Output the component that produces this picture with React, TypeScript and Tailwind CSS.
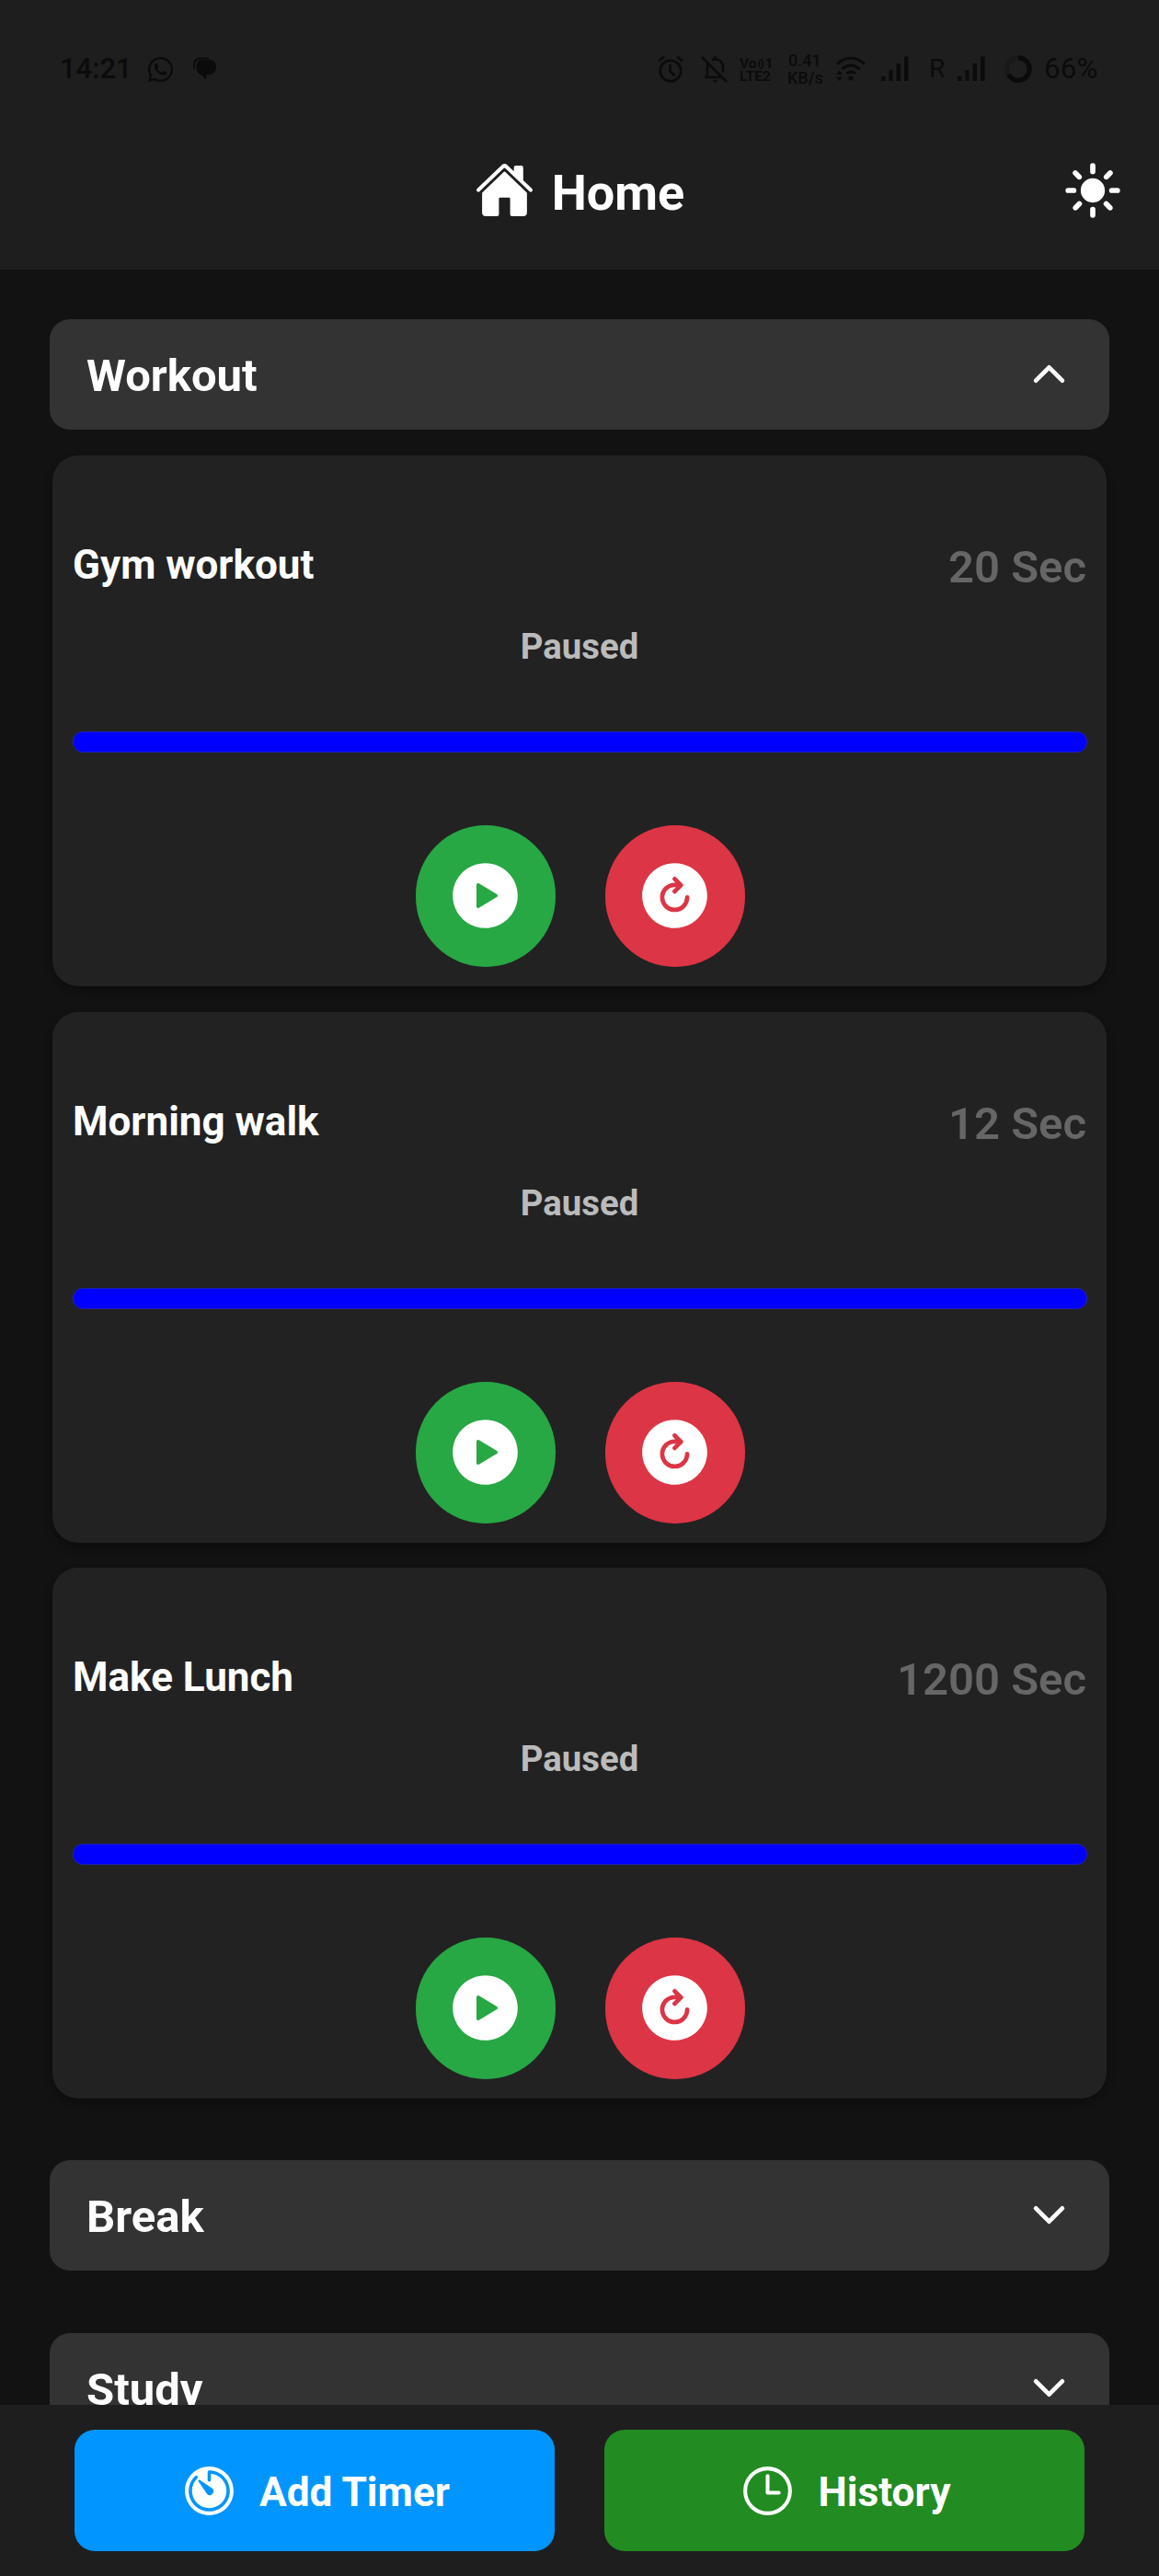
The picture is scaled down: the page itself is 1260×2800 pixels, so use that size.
import React from "react";
import {
  IoChevronDown,
  IoChevronUp,
  IoHome,
  IoPlayCircle,
  IoRefreshCircle,
  IoSunny,
  IoTimeOutline,
  IoTimer,
} from "react-icons/io5";
import { FaWhatsapp } from "react-icons/fa";

function Signal() {
  return (
    <svg width="30" height="28" viewBox="0 0 30 28" fill="currentColor">
      <path d="M0 22h4.500v5H0zM8.500 15h4v12h-4zM16.500 8h4.500v19h-4.500zM25 .5h4.500V27H25z" />
    </svg>
  );
}

function StatusBar() {
  return (
    <div className="flex h-[150px] items-start pt-[54px] pl-[65px] text-[#0b0b0b]">
      <div className="flex h-[42px] items-center">
        <span className="w-[94px] text-[31px] font-medium">14:21</span>
        <FaWhatsapp className="mr-[20px] size-[31px]" />
        <svg width="26" height="26" viewBox="0 0 26 26" fill="currentColor">
          <path d="M9 3H18c4 0 7 3 7 7.500S22 19 18 19h-3l-1.500 5.500L8.500 19C5 18.500 3.500 15 3.500 11S5 3 9 3z" />
          <path d="M1.500 13C0 7 2 1.500 8 1.500h9" fill="none" stroke="currentColor" strokeWidth="2" />
        </svg>
      </div>
      <div className="ml-[479px] flex h-[42px] items-center">
        <svg className="mr-[19px]" width="28" height="30" viewBox="0 0 28 30" fill="none" stroke="currentColor" strokeWidth="2.600">
          <circle cx="14" cy="17" r="11.300" />
          <path d="M1 6.500l6-5M27 6.500l-6-5M13.500 10v7.500l5 4.500" />
        </svg>
        <svg className="mr-[12px]" width="30" height="30" viewBox="0 0 30 30" fill="none" stroke="currentColor" strokeWidth="2.600">
          <path d="M1 2l27 27M4 24h19M7 24V13c0-2 .5-3.500 1.500-5M12 5.500c6-3 12 1 12 8v5" />
          <path d="M12.500 27h6l-3 3zM13 3.500L15.500 0 18 3.500z" fill="currentColor" stroke="none" />
        </svg>
        <div className="mt-[2px] w-[52px] text-[15.500px] leading-[14px] font-bold">
          <div className="flex items-center">
            Vo
            <svg className="mx-[1px]" width="7" height="13" viewBox="0 0 7 13" fill="none" stroke="currentColor" strokeWidth="1.700">
              <path d="M0 3q3 3.500 0 7M3 1q5 5.500 0 11" />
            </svg>
            1
          </div>
          <div>LTE2</div>
        </div>
        <div className="w-[52px] text-[18px] leading-[19px] font-medium">
          <div className="pl-[1px]">0.41</div>
          <div>KB/s</div>
        </div>
        <svg className="mr-[16px]" width="34" height="28" viewBox="0 0 34 28" fill="none" stroke="currentColor" strokeWidth="3">
          <path d="M2 8.500q15-13 30 0M7.500 14q9.500-8 19 0M12.500 19q5-4 9.500 0" />
          <circle cx="17" cy="24" r="2.600" fill="currentColor" stroke="none" />
          <path d="M1 20l3.500-4.500L8 20zM1 22.500L4.500 27 8 22.500z" fill="currentColor" stroke="none" />
        </svg>
        <Signal />
        <span className="w-[53px] pl-[22px] text-[28px]">R</span>
        <Signal />
        <svg className="mr-[13px] ml-[21px]" width="30" height="30" viewBox="0 0 30 30" fill="none" strokeWidth="5">
          <circle cx="15" cy="15" r="12.300" stroke="#191919" />
          <path d="M15 2.700A12.300 12.300 0 1 1 4.300 21.100" stroke="currentColor" />
        </svg>
        <span className="text-[31.500px]">66%</span>
      </div>
    </div>
  );
}

function Section({ title, open = false }: { title: string; open?: boolean }) {
  return (
    <div className="flex h-[120px] shrink-0 items-center justify-between rounded-[22px] bg-[#333333] pr-[40px] pl-[40px]">
      <span className="pt-[4px] text-[49px] leading-[60px] font-bold">{title}</span>
      {open ? <IoChevronUp className="-mt-px size-[51px]" /> : <IoChevronDown className="-mt-px size-[51px]" />}
    </div>
  );
}

function TimerCard({ name, time }: { name: string; time: string }) {
  return (
    <div className="mx-[3px] flex h-[577px] shrink-0 flex-col rounded-[28px] bg-[#222222] px-[22px] shadow-[0_5px_10px_rgba(0,0,0,0.300)]">
      <div className="mt-[88px] flex h-[66px] items-start justify-between">
        <span className="text-[44px] leading-[62px] font-bold">{name}</span>
        <span className="pt-[1px] text-[49px] leading-[66px] font-semibold text-[#666666]">{time}</span>
      </div>
      <div className="mt-[34px] text-center text-[38.400px] leading-[40px] font-bold text-[#bbbbbb]">Paused</div>
      <div className="mt-[72px] -mr-px h-[23px] rounded-[11px] border border-[#2020b8] bg-[#0000ff]" />
      <div className="mt-[79px] flex justify-center gap-[54px] pl-[2px]">
        <div className="flex h-[154px] w-[152px] items-center justify-center rounded-full bg-[#28a745]">
          <IoPlayCircle className="-mt-px -ml-px size-[87px]" />
        </div>
        <div className="flex h-[154px] w-[152px] items-center justify-center rounded-full bg-[#dc3545]">
          <IoRefreshCircle className="-mt-px -ml-px size-[87px]" />
        </div>
      </div>
    </div>
  );
}

export default function App() {
  return (
    <div className="flex h-[2800px] w-[1260px] flex-col overflow-hidden bg-[#121212] font-[Roboto,sans-serif] text-white">
      <header className="h-[293px] shrink-0 bg-[#1e1e1e]">
        <StatusBar />
        <div className="grid h-[113px] grid-cols-[1fr_auto_1fr] items-center">
          <div />
          <div className="flex items-center">
            <IoHome className="size-[65px]" />
            <span className="ml-[19px] pt-[6px] text-[54px] leading-[66px] font-bold">Home</span>
          </div>
          <IoSunny className="mr-[39px] size-[66px] justify-self-end" />
        </div>
      </header>
      <main className="flex h-[2321px] shrink-0 flex-col overflow-hidden px-[54px] pt-[54px]">
        <Section title="Workout" open />
        <div className="mt-[28px] mb-[67px] flex shrink-0 flex-col gap-[27.500px]">
          <TimerCard name="Gym workout" time="20 Sec" />
          <TimerCard name="Morning walk" time="12 Sec" />
          <TimerCard name="Make Lunch" time="1200 Sec" />
        </div>
        <Section title="Break" />
        <div className="h-[68px] shrink-0" />
        <Section title="Study" />
      </main>
      <footer className="flex h-[186px] shrink-0 gap-[54px] bg-[#1e1e1e] px-[81px] pt-[27px] text-[44.300px] leading-[54px] font-bold">
        <button className="flex h-[132px] w-[522px] items-center justify-center rounded-[22px] bg-[#0095ff]">
          <IoTimer className="size-[65px]" />
          <span className="ml-[22px] pt-[3px]">Add Timer</span>
        </button>
        <button className="flex h-[132px] w-[522px] items-center justify-center rounded-[22px] bg-[#228b22]">
          <IoTimeOutline className="size-[65px]" />
          <span className="ml-[22px] pt-[3px]">History</span>
        </button>
      </footer>
    </div>
  );
}
